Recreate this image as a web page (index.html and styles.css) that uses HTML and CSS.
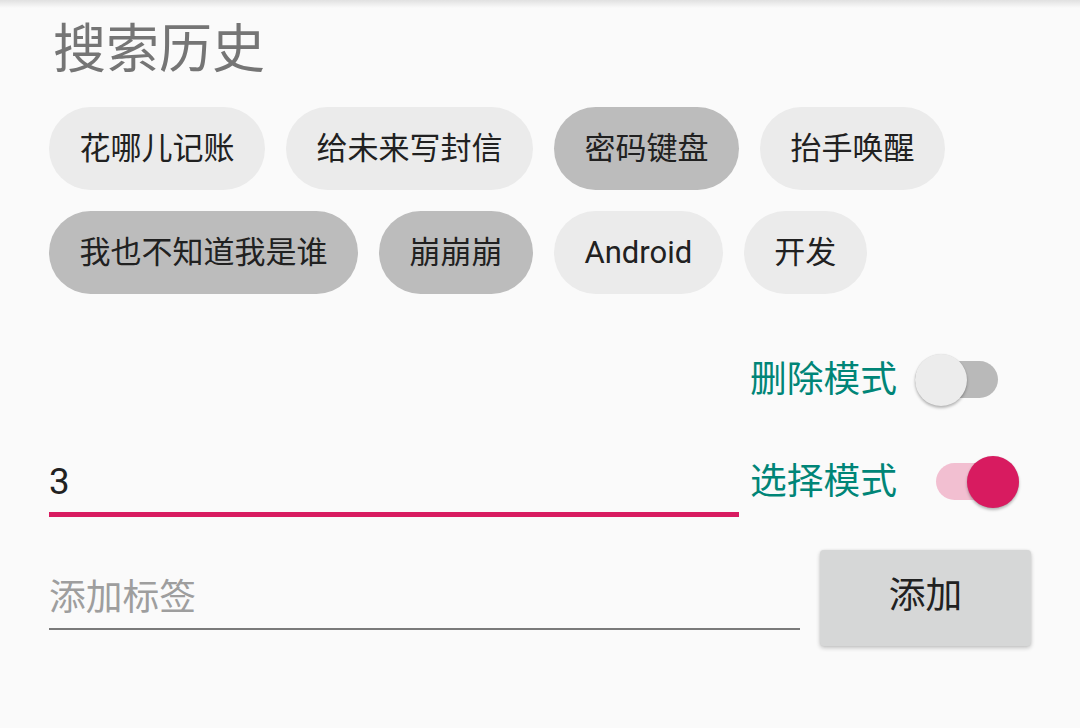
FILE: index.html
```html
<!DOCTYPE html>
<html lang="zh-CN">
<head>
<meta charset="utf-8">
<title>搜索历史</title>
<link rel="stylesheet" href="styles.css">
</head>
<body>
<div class="appbar-shadow"></div>
<main class="page">
  <h1 class="title">搜索历史</h1>
  <ul class="chips">
    <li class="chip">花哪儿记账</li>
    <li class="chip">给未来写封信</li>
    <li class="chip chip--selected">密码键盘</li>
    <li class="chip">抬手唤醒</li>
    <li class="chip chip--selected">我也不知道我是谁</li>
    <li class="chip chip--selected">崩崩崩</li>
    <li class="chip">Android</li>
    <li class="chip">开发</li>
  </ul>

  <div class="mode-row mode-row--delete">
    <div class="mode mode--off">
      <span class="mode-label">删除模式</span>
      <span class="switch"><span class="track"></span><span class="thumb"></span></span>
    </div>
  </div>

  <div class="mode-row mode-row--select">
    <div class="field field--focused">3</div>
    <div class="mode mode--on">
      <span class="mode-label">选择模式</span>
      <span class="switch switch--on"><span class="track"></span><span class="thumb"></span></span>
    </div>
  </div>

  <div class="add-row">
    <div class="field field--hint">添加标签</div>
    <button class="add-btn">添加</button>
  </div>
</main>
</body>
</html>
```

FILE: styles.css
```css
html, body {
  margin: 0;
  padding: 0;
}

body {
  width: 1080px;
  height: 728px;
  overflow: hidden;
  background: #fafafa;
  font-family: Roboto, "Noto Sans CJK SC", sans-serif;
  color: #212121;
}

.appbar-shadow {
  height: 8px;
  background: linear-gradient(rgba(0, 0, 0, 0.1), rgba(0, 0, 0, 0));
}

.page {
  padding-left: 49px;
}

.title {
  margin: 16px 0 0 4px;
  font-size: 53px;
  line-height: 53px;
  font-weight: 400;
  color: #757575;
}

.chips {
  list-style: none;
  margin: 30px 0 0 0;
  padding: 0;
  display: flex;
  flex-wrap: wrap;
  gap: 21px;
  width: 980px;
}

.chip {
  height: 83px;
  line-height: 84px;
  padding: 0 30.5px;
  border-radius: 41.5px;
  background: #ebebeb;
  font-size: 31px;
  color: #212121;
  white-space: nowrap;
}

.chip--selected {
  background: #bcbcbc;
}

.mode-row {
  display: flex;
  align-items: flex-start;
}

.mode-row--delete {
  margin-top: 59px;
  padding-right: 82px;
  justify-content: flex-end;
}

.mode-row--select {
  margin-top: 49px;
  padding-right: 61px;
}

.mode {
  display: flex;
  align-items: center;
  margin-left: auto;
}

.mode--off {
  gap: 18px;
}

.mode--on {
  gap: 39px;
}

.mode-label {
  font-size: 36.75px;
  line-height: 53px;
  color: #008577;
}

.switch {
  position: relative;
  width: 83px;
  height: 52px;
  display: block;
}

.track {
  position: absolute;
  left: 0;
  right: 0;
  top: 7.5px;
  height: 37px;
  border-radius: 18.5px;
  background: #b9b9b9;
}

.thumb {
  position: absolute;
  left: 0;
  top: 0;
  width: 52px;
  height: 52px;
  border-radius: 50%;
  background: #ececec;
  box-shadow: 0 2px 3px rgba(0, 0, 0, 0.28), 0 0 1px rgba(0, 0, 0, 0.12);
}

.switch--on .track {
  background: #f2bfd1;
}

.switch--on .thumb {
  left: auto;
  right: 0;
  background: #d81b60;
}

.field {
  font-size: 36.75px;
  line-height: 36.75px;
  white-space: nowrap;
}

.field--focused {
  width: 690px;
  margin-top: 9px;
  padding-bottom: 11px;
  border-bottom: 5px solid #d81b60;
  color: #212121;
}

.add-row {
  display: flex;
  align-items: flex-start;
  margin-top: 33px;
}

.field--hint {
  width: 751px;
  margin-top: 30px;
  padding-bottom: 11px;
  border-bottom: 2px solid #7a7a7a;
  color: #9e9e9e;
}

.add-btn {
  margin-left: 20px;
  width: 211px;
  height: 96px;
  border: none;
  border-radius: 4px;
  background: #d6d7d7;
  box-shadow: 0 2px 4px rgba(0, 0, 0, 0.22), 0 0 2px rgba(0, 0, 0, 0.08);
  font-family: Roboto, "Noto Sans CJK SC", sans-serif;
  font-size: 36.75px;
  line-height: 1;
  padding: 0 0 2px 0;
  color: #212121;
}
```
